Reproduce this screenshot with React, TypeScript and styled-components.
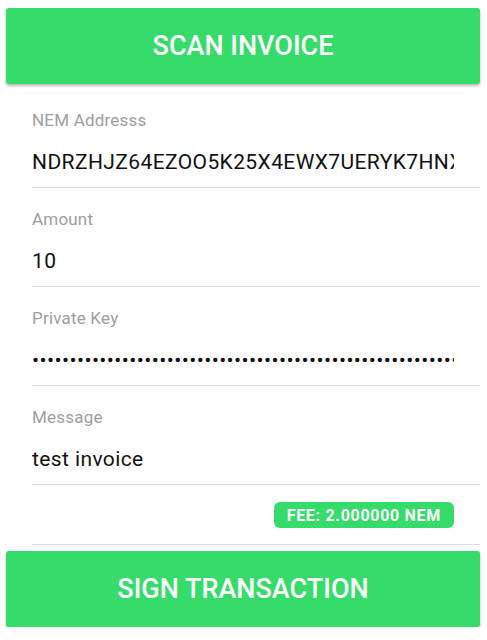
import styled, { createGlobalStyle } from 'styled-components';

const GlobalStyle = createGlobalStyle`
	html, body {
		margin: 0;
		padding: 0;
		background: #ffffff;
		font-family: Roboto, "Noto Sans", sans-serif;
	}
`;

const Page = styled.div`
	display: flex;
	flex-direction: column;
	padding: 8px 7px 0 6px;
`;

const ActionButton = styled.button<{ $gap: number }>`
	display: flex;
	align-items: center;
	justify-content: center;
	height: 76px;
	width: 100%;
	margin-top: ${(props) => props.$gap}px;
	border: none;
	border-radius: 3px;
	background: #35dc6a;
	color: #ffffff;
	font-family: Roboto, sans-serif;
	font-size: 27px;
	font-weight: 500;
	box-shadow: 0 2px 3px rgba(0, 0, 0, 0.28);
`;

const Form = styled.div`
	display: flex;
	flex-direction: column;
	margin: 5px 0 0 26px;
`;

const Field = styled.label`
	display: flex;
	flex-direction: column;
	padding-top: 21px;
`;

const Label = styled.span`
	font-size: 17px;
	line-height: 20px;
	letter-spacing: 0.2px;
	color: #9e9e9e;
`;

const Input = styled.input`
	box-sizing: border-box;
	height: 58px;
	padding: 6px 26px 0 0;
	border: none;
	border-bottom: 1px solid #dddddd;
	outline: none;
	background: transparent;
	font-family: Roboto, sans-serif;
	font-size: 21px;
	letter-spacing: 0.4px;
	color: #111111;
`;

const FeeRow = styled.div`
	display: flex;
	justify-content: flex-end;
	padding: 17px 26px 16px 0;
	border-bottom: 1px solid #dddddd;
`;

const FeeBadge = styled.span`
	display: flex;
	align-items: center;
	height: 26px;
	padding: 0 13px;
	border-radius: 6px;
	background: #35dc6a;
	color: #ffffff;
	font-size: 16px;
	font-weight: 700;
	letter-spacing: 0.7px;
`;

const fields = [
	{ label: 'NEM Addresss', value: 'NDRZHJZ64EZOO5K25X4EWX7UERYK7HNXQ3AU4NQT', type: 'text' },
	{ label: 'Amount', value: '10', type: 'text' },
	{ label: 'Private Key', value: 'a3f9c1d27e8b4f06a5c3d19e7b2f48a0c6e1d5b93f7a2c8e4d0b6f1a9c3e57d2', type: 'password' },
	{ label: 'Message', value: 'test invoice', type: 'text' }
];

const App = () => {
	return (
		<Page>
			<GlobalStyle />
			<ActionButton $gap={0}>SCAN INVOICE</ActionButton>
			<Form>
				{fields.map((field) => (
					<Field key={field.label}>
						<Label>{field.label}</Label>
						<Input type={field.type} defaultValue={field.value} readOnly />
					</Field>
				))}
				<FeeRow>
					<FeeBadge>FEE: 2.000000 NEM</FeeBadge>
				</FeeRow>
			</Form>
			<ActionButton $gap={6}>SIGN TRANSACTION</ActionButton>
		</Page>
	);
};

export default App;
